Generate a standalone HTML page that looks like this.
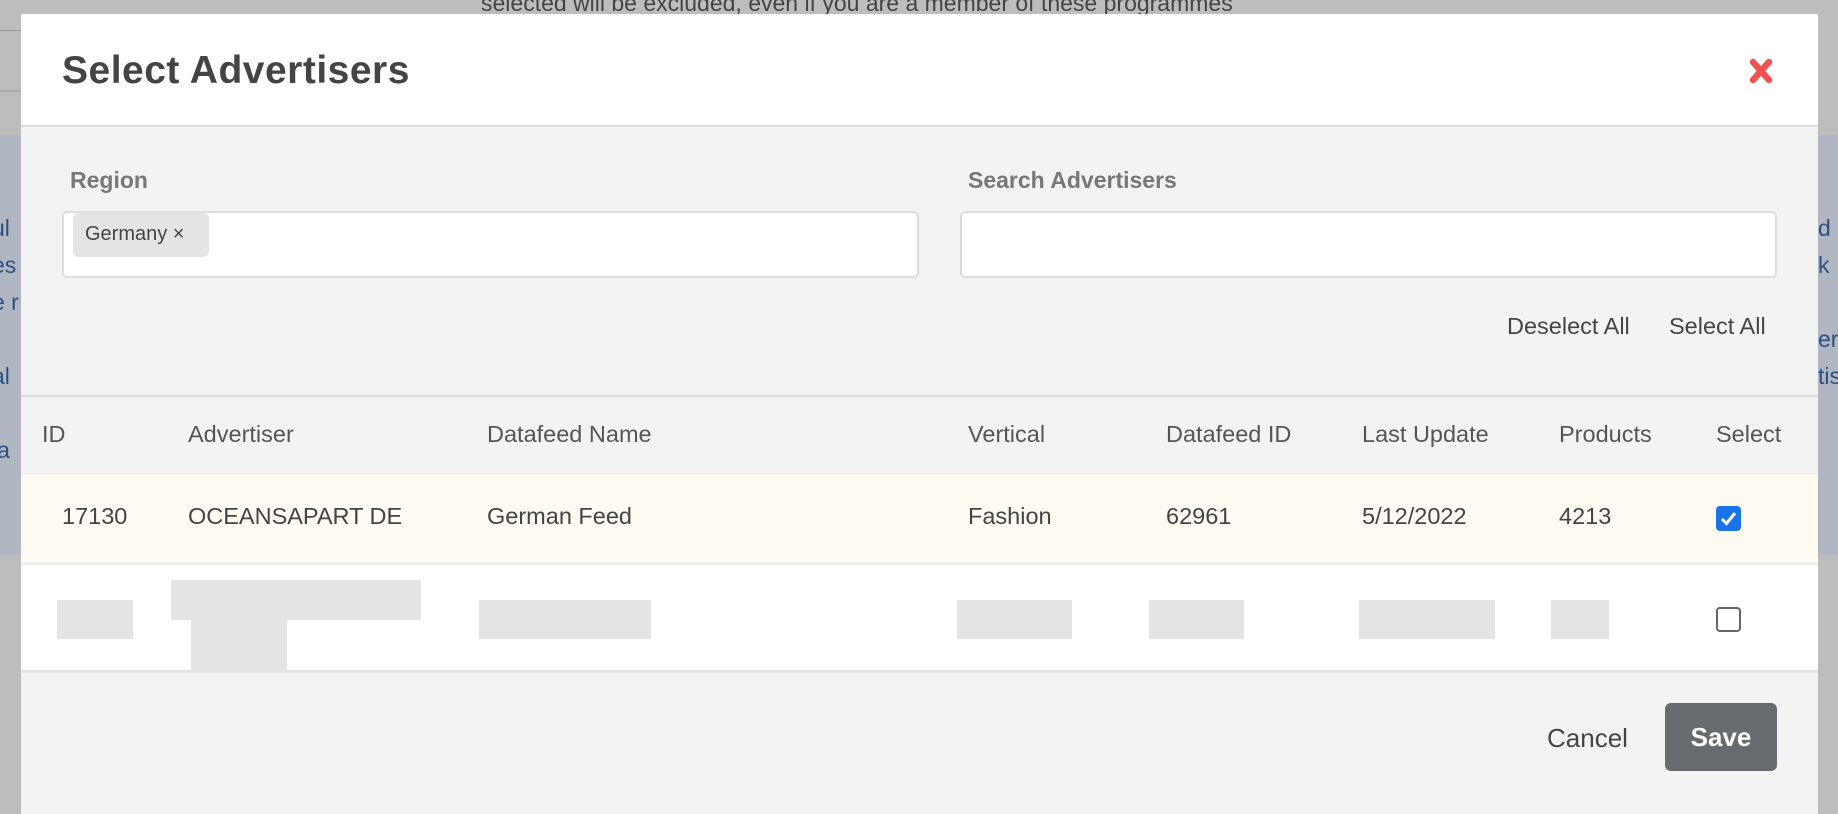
<!DOCTYPE html>
<html><head><meta charset="utf-8"><style>
*{box-sizing:border-box;margin:0;padding:0}
body{width:1838px;height:794px;overflow:hidden;background:#bdbdbd;font-family:"Liberation Sans",sans-serif;color:#444;position:relative}
.abs{position:absolute}
.modal{position:absolute;left:21px;top:14px;width:1797px;height:800px;background:#f3f3f3}
.hdr{position:absolute;left:0;top:0;width:100%;height:113px;background:#fff;border-bottom:2px solid #ddd}
.t{position:absolute;white-space:nowrap}
.inp{position:absolute;background:#fff;border:2px solid #ddd;border-radius:5px}
.th{font-size:23.5px;color:#555;top:407px}
.td{font-size:23.5px;color:#444;top:489px}
.blur{position:absolute;background:#e4e4e4}
</style></head><body>
<div class="t" style="left:481px;top:-10px;font-size:23px;color:#444">selected will be excluded, even if you are a member of these programmes</div>
<div class="abs" style="left:0;top:30px;width:21px;height:1px;background:#999"></div>
<div class="abs" style="left:0;top:90px;width:21px;height:2px;background:#aaa"></div>
<div class="abs" style="left:0;top:135px;width:21px;height:420px;background:#b0b7c2"></div>
<div class="abs" style="left:1818px;top:135px;width:20px;height:420px;background:#b0b7c2"></div>
<div class="t" style="left:-8px;top:210px;font-size:23px;color:#2c4f80;line-height:37px">ul<br>es<br>e r<br><br>al<br><br>la</div>
<div class="t" style="left:1818px;top:210px;font-size:23px;color:#2c4f80;line-height:37px">d<br>k<br><br>er<br>tis</div>
<div class="modal">
 <div class="hdr">
  <div class="t" style="left:41px;top:35px;font-size:39px;font-weight:bold;color:#444;letter-spacing:0.5px">Select Advertisers</div>
  <svg class="abs" style="left:1726px;top:43px" width="28" height="28" viewBox="0 0 28 28"><path d="M6 5L22 23M22 5L6 23" stroke="#f05252" stroke-width="6.5" stroke-linecap="round"/></svg>
 </div>
 <div class="t" style="left:49px;top:153px;font-size:23px;font-weight:bold;color:#777">Region</div>
 <div class="t" style="left:947px;top:153px;font-size:23px;font-weight:bold;color:#777">Search Advertisers</div>
 <div class="inp" style="left:41px;top:197px;width:857px;height:67px">
  <div class="abs" style="left:9px;top:0;width:136px;height:44px;background:#e4e4e4;border-radius:6px;font-size:20px;color:#444;padding:10px 0 0 12px">Germany ×</div>
 </div>
 <div class="inp" style="left:939px;top:197px;width:817px;height:67px"></div>
 <div class="t" style="left:1486px;top:299px;font-size:23.5px;color:#444">Deselect All</div>
 <div class="t" style="left:1648px;top:299px;font-size:23.5px;color:#444">Select All</div>
 <div class="abs" style="left:0;top:381px;width:100%;height:2px;background:#ddd"></div>
 <div class="t th" style="left:21px">ID</div>
 <div class="t th" style="left:167px">Advertiser</div>
 <div class="t th" style="left:466px">Datafeed Name</div>
 <div class="t th" style="left:947px">Vertical</div>
 <div class="t th" style="left:1145px">Datafeed ID</div>
 <div class="t th" style="left:1341px">Last Update</div>
 <div class="t th" style="left:1538px">Products</div>
 <div class="t th" style="left:1695px">Select</div>
 <div class="abs" style="left:0;top:459px;width:100%;height:89px;background:#fffaf2;border-top:1px solid #e8e8e8"></div>
 <div class="t td" style="left:41px">17130</div>
 <div class="t td" style="left:167px">OCEANSAPART DE</div>
 <div class="t td" style="left:466px">German Feed</div>
 <div class="t td" style="left:947px">Fashion</div>
 <div class="t td" style="left:1145px">62961</div>
 <div class="t td" style="left:1341px">5/12/2022</div>
 <div class="t td" style="left:1538px">4213</div>
 <div class="abs" style="left:1695px;top:492px;width:25px;height:25px;background:#1a73e8;border-radius:4px"><svg width="25" height="25" viewBox="0 0 25 25"><path d="M6 13l4.5 4.5L19 7" stroke="#fff" stroke-width="3" fill="none"/></svg></div>
 <div class="abs" style="left:0;top:549px;width:100%;height:110px;background:#fff;border-top:2px solid #eee;border-bottom:3px solid #e4e4e4"></div>
 <div class="blur" style="left:36px;top:586px;width:76px;height:39px"></div>
 <div class="blur" style="left:150px;top:566px;width:250px;height:40px"></div>
 <div class="blur" style="left:170px;top:600px;width:96px;height:58px"></div>
 <div class="blur" style="left:458px;top:586px;width:172px;height:39px"></div>
 <div class="blur" style="left:936px;top:586px;width:115px;height:39px"></div>
 <div class="blur" style="left:1128px;top:586px;width:95px;height:39px"></div>
 <div class="blur" style="left:1338px;top:586px;width:136px;height:39px"></div>
 <div class="blur" style="left:1530px;top:586px;width:58px;height:39px"></div>
 <div class="abs" style="left:1695px;top:593px;width:25px;height:25px;border:2px solid #666;border-radius:4px;background:#fff"></div>
 <div class="t" style="left:1526px;top:709px;font-size:26px;color:#444">Cancel</div>
 <div class="abs" style="left:1644px;top:689px;width:112px;height:68px;background:#676a6e;border-radius:6px;color:#fff;font-size:26px;font-weight:bold;text-align:center;line-height:68px">Save</div>
</div>
</body></html>
